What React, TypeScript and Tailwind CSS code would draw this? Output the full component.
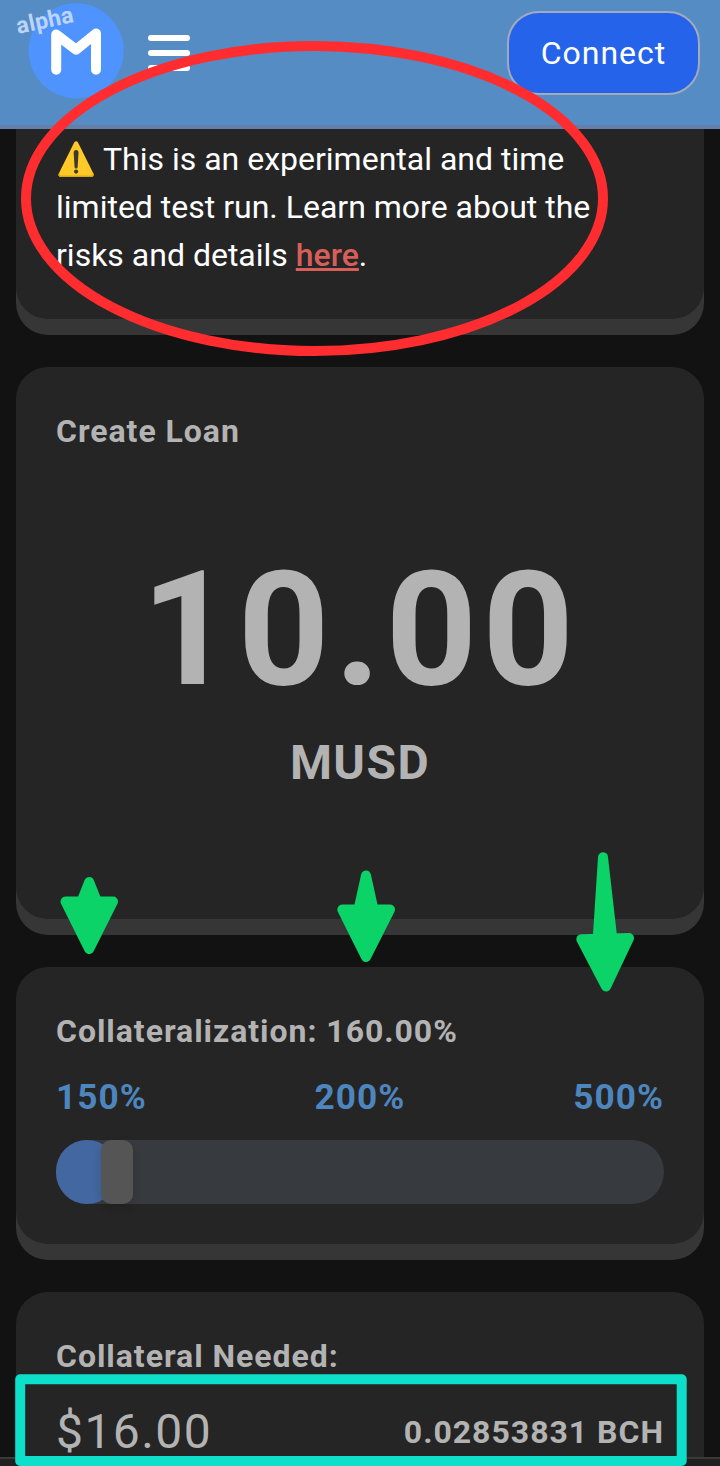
import type { FC, ReactNode } from "react";
import clsx from "clsx";

interface CardProps {
  className?: string;
  children: ReactNode;
}

const Card: FC<CardProps> = ({ className, children }) => (
  <section
    className={clsx(
      "mx-4 bg-[#252525] px-10 shadow-[0_16px_0_#363636]",
      className,
    )}
  >
    {children}
  </section>
);

const Logo = () => (
  <div className="relative ml-7 h-24 w-24">
    <svg viewBox="28 3 96 96" className="h-24 w-24">
      <circle cx="76.2" cy="50.8" r="47.5" fill="#4f93ff" />
      <path
        d="M56.2 69.7V34.5L76.2 49.7L96 33.5V69.7"
        fill="none"
        stroke="#fff"
        strokeWidth="10"
        strokeLinecap="round"
        strokeLinejoin="round"
      />
    </svg>
    <span className="absolute top-[5px] -left-3 -rotate-[12deg] text-[23px] leading-[26px] font-bold tracking-[0.3px] text-[#bcd5f7]">
      alpha
    </span>
  </div>
);

const Header = () => (
  <header className="flex h-[129px] items-start border-b-4 border-[#647fab] bg-[#558cc3]">
    <div className="flex flex-1 items-start pt-[3px]">
      <Logo />
      <button className="mt-8 ml-6 flex w-[42px] flex-col gap-[9px]">
        <span className="h-1.5 rounded-full bg-white" />
        <span className="h-1.5 rounded-full bg-white" />
        <span className="h-1.5 rounded-full bg-white" />
      </button>
    </div>
    <button className="mt-[11px] mr-5 h-[84px] w-[193px] rounded-[32px] border-2 border-[#a3aabb] bg-[#2563eb] text-[32px] tracking-[0.96px] text-white">
      Connect
    </button>
  </header>
);

const WarningIcon = () => (
  <svg viewBox="0 0 38 38" className="mr-[9px] inline-block h-[38px] w-[38px]">
    <path
      d="M18.2 2.6C19.1.9 21.1.9 22 2.6L37.4 33.6C38.2 35.4 37.4 36.8 35.5 36.8H4.7C2.8 36.8 2 35.4 2.8 33.6Z"
      fill="#ffca28"
    />
    <path
      d="M2.8 33.6C2 35.4 2.8 36.8 4.7 36.8H35.5C37.4 36.8 38.2 35.4 37.4 33.6L36.8 32.5C36.8 34.6 36.2 35.6 34.5 35.6H5.7C4 35.6 3.4 34.6 3.4 32.5Z"
      fill="#e2a610"
    />
    <path
      d="M20.1 10C22 10 22.6 11.4 22.5 13.4L21.6 27C21.4 29 18.8 29 18.6 27L17.7 13.4C17.6 11.4 18.2 10 20.1 10Z"
      fill="#3d3a2e"
    />
    <circle cx="20.1" cy="31.6" r="2.1" fill="#3d3a2e" />
  </svg>
);

// Hand drawn marks that sit above the page
const Marks = () => (
  <svg
    viewBox="0 0 720 1466"
    className="pointer-events-none absolute inset-0 h-[1466px] w-[720px]"
  >
    <ellipse
      cx="314.5"
      cy="198.5"
      rx="288.5"
      ry="152.5"
      fill="none"
      stroke="#ff2d30"
      strokeWidth="10"
    />
    <g
      fill="#0bd367"
      stroke="#0bd367"
      strokeWidth="10"
      strokeLinejoin="round"
    >
      <path d="M65.5 901.5H113L89.2 949Z" />
      <path d="M89.2 882L97 901.5H81.5Z" />
      <path d="M342.3 909.5H390L366 957Z" />
      <path d="M366 875.5L373.5 909.5H358.5Z" />
      <path d="M581.3 939.2L629 938L606 986.5Z" />
      <path d="M603 857.3L612.3 938.5L597.7 939Z" />
    </g>
    <rect
      x="20.2"
      y="1379.3"
      width="661.5"
      height="81.7"
      fill="none"
      stroke="#0ddfcb"
      strokeWidth="10"
      strokeLinejoin="round"
    />
  </svg>
);

const MARKS = ["150%", "200%", "500%"];

const App = () => {
  return (
    <div className="relative flex h-[1466px] w-[720px] flex-col overflow-hidden bg-[#121212] font-[Roboto,sans-serif] text-[#b3b3b3]">
      <Header />

      <main className="flex min-h-0 flex-1 flex-col gap-12">
        <Card className="h-[190px] shrink-0 rounded-b-[32px] pt-1.5">
          <p className="text-[32px] leading-[48px] whitespace-nowrap text-white">
            <span className="flex h-12 items-center">
              <WarningIcon />
              This is an experimental and time
            </span>
            limited test run. Learn more about the
            <br />
            risks and details{" "}
            <a className="font-medium text-[#d75f59] underline decoration-[3px] underline-offset-2">
              here
            </a>
            .
          </p>
        </Card>

        <Card className="flex h-[552px] shrink-0 flex-col rounded-[32px] pt-10">
          <h2 className="text-[32px] leading-[48px] font-bold tracking-[0.96px]">
            Create Loan
          </h2>
          <div className="mt-[79px] text-center text-[160px] leading-[192px] font-bold tracking-[4.8px]">
            10.00
          </div>
          <div className="mt-[9px] text-center text-5xl leading-[56px] font-bold tracking-[1.44px]">
            MUSD
          </div>
        </Card>

        <Card className="h-[277px] shrink-0 rounded-[32px] pt-10">
          <h2 className="text-[32px] leading-[48px] font-bold tracking-[0.96px]">
            Collateralization: 160.00%
          </h2>
          <div className="mt-4 flex justify-between text-[35.2px] leading-[52px] font-bold tracking-[1.06px] text-[#4d86bf]">
            {MARKS.map((mark) => (
              <span key={mark}>{mark}</span>
            ))}
          </div>
          <div className="relative mt-[17px] h-16 rounded-full bg-[#373a3f]">
            <div className="h-16 w-[62px] rounded-full bg-[#4367a0]" />
            <div className="absolute top-0 left-[45px] h-16 w-8 rounded-[10px] bg-[#555] shadow-[0_4px_10px_rgba(0,0,0,0.15)]" />
          </div>
        </Card>

        <Card className="h-[400px] shrink-0 rounded-[32px] pt-10">
          <h2 className="text-[32px] leading-[48px] font-bold tracking-[0.96px]">
            Collateral Needed:
          </h2>
          <div className="mt-7 flex items-center justify-between">
            <span className="text-5xl leading-[48px] tracking-[1.44px]">
              $16.00
            </span>
            <span className="text-[32px] leading-[48px] font-bold tracking-[0.98px]">
              0.02853831 BCH
            </span>
          </div>
        </Card>
      </main>

      <footer className="relative h-[9px] shrink-0 border-t-2 border-[#3a3a3a] bg-[#202020]" />

      <Marks />
    </div>
  );
};

export default App;
